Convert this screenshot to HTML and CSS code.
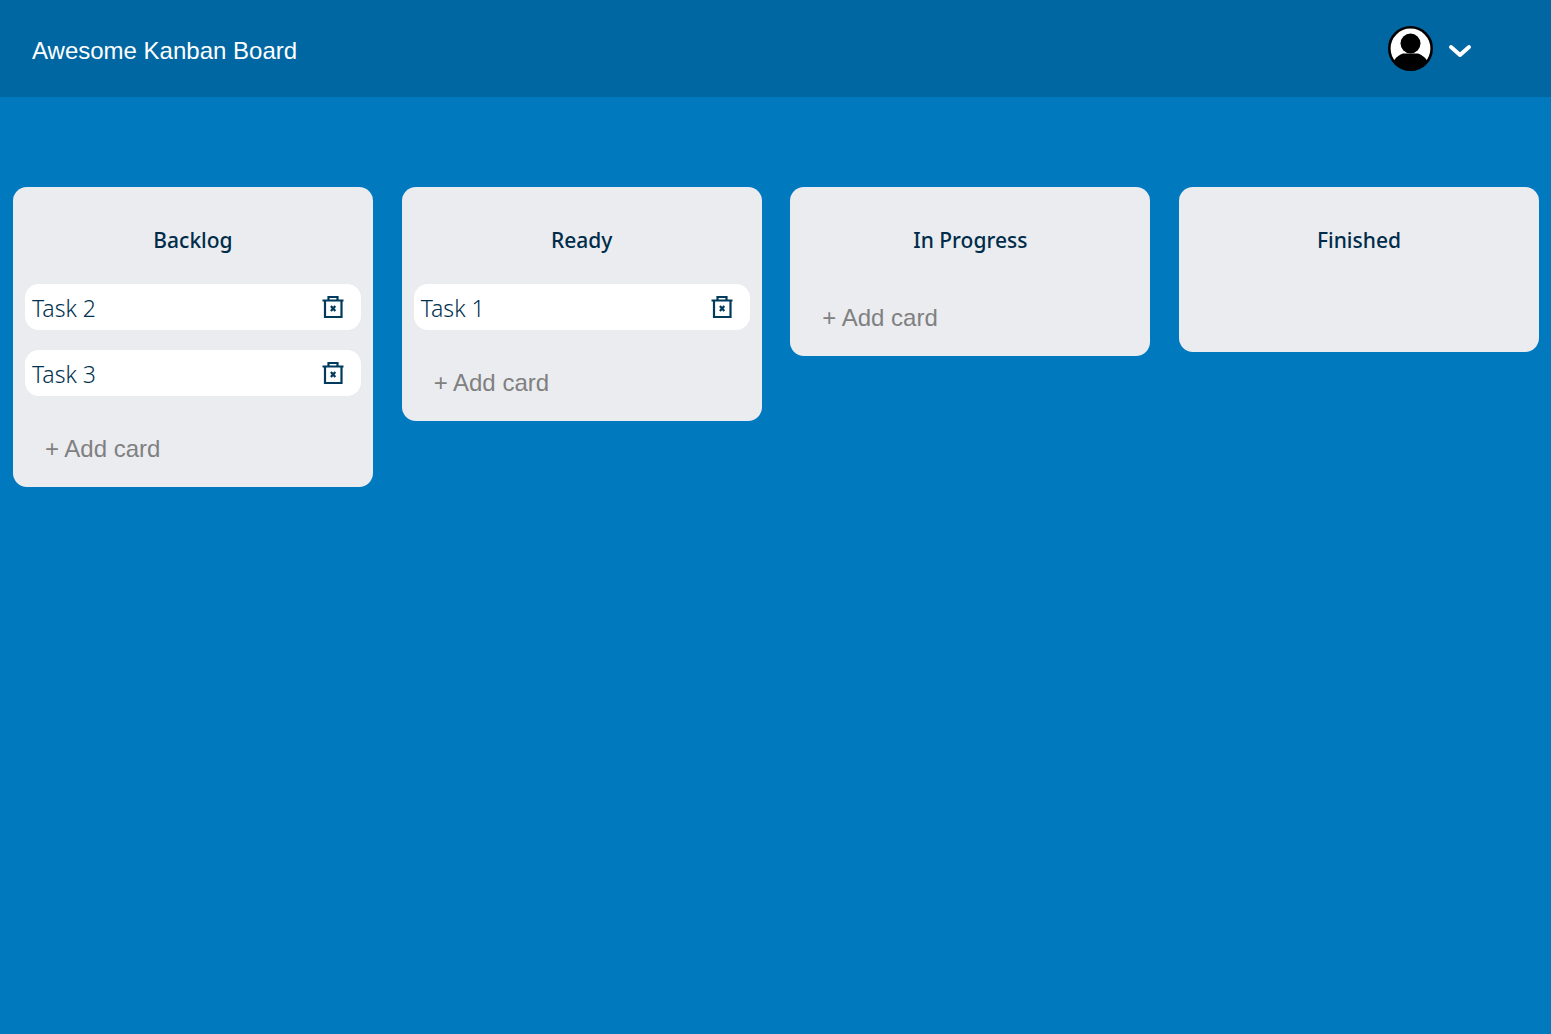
FILE: index.html
```html
<!DOCTYPE html>
<html lang="en">
<head>
<meta charset="utf-8">
<title>Awesome Kanban Board</title>
<link rel="stylesheet" href="styles.css">
</head>
<body>
<header class="topbar">
  <h1 class="brand">Awesome Kanban Board</h1>
  <div class="user">
    <svg class="avatar" viewBox="0 0 45 45" width="45" height="45" aria-hidden="true">
      <defs><clipPath id="c"><circle cx="22.500" cy="22.500" r="21.500"/></clipPath></defs>
      <circle cx="22.500" cy="22.500" r="21.200" fill="#fff" stroke="#000" stroke-width="2.600"/>
      <g clip-path="url(#c)" fill="#000">
        <ellipse cx="22.500" cy="17.500" rx="10" ry="10"/>
        <path d="M3 45C3 36 8 30 15 27.500H30C37 30 42 36 42 45z"/>
      </g>
    </svg>
    <svg class="chevron" viewBox="0 0 24 14" width="24" height="14" aria-hidden="true">
      <path d="M3 3l9 8 9-8" fill="none" stroke="#fff" stroke-width="4" stroke-linecap="round" stroke-linejoin="round"/>
    </svg>
  </div>
</header>
<main class="board">
  <section class="column">
    <h2 class="column-title">Backlog</h2>
    <div class="card"><span>Task 2</span>
      <svg class="trash" viewBox="0 0 22 24" width="22" height="24" aria-hidden="true"><path d="M.5 5.500h21M3 5.500v16.500h16.500V5.500M6.500 5.500V2h9v3.500M8.900 11l4.400 5M13.300 11l-4.400 5" fill="none" stroke="#003a5c" stroke-width="2.200"/></svg>
    </div>
    <div class="card"><span>Task 3</span>
      <svg class="trash" viewBox="0 0 22 24" width="22" height="24" aria-hidden="true"><path d="M.5 5.500h21M3 5.500v16.500h16.500V5.500M6.500 5.500V2h9v3.500M8.900 11l4.400 5M13.300 11l-4.400 5" fill="none" stroke="#003a5c" stroke-width="2.200"/></svg>
    </div>
    <div class="add">+ Add card</div>
  </section>
  <section class="column">
    <h2 class="column-title">Ready</h2>
    <div class="card"><span>Task 1</span>
      <svg class="trash" viewBox="0 0 22 24" width="22" height="24" aria-hidden="true"><path d="M.5 5.500h21M3 5.500v16.500h16.500V5.500M6.500 5.500V2h9v3.500M8.900 11l4.400 5M13.300 11l-4.400 5" fill="none" stroke="#003a5c" stroke-width="2.200"/></svg>
    </div>
    <div class="add">+ Add card</div>
  </section>
  <section class="column">
    <h2 class="column-title">In Progress</h2>
    <div class="add add-first">+ Add card</div>
  </section>
  <section class="column column-empty">
    <h2 class="column-title">Finished</h2>
  </section>
</main>
</body>
</html>
```
FILE: styles.css
```css
* { box-sizing: border-box; }
html, body { margin: 0; height: 100%; }
body { background: #0079bf; font-family: "Liberation Sans", Arial, sans-serif; overflow: hidden; }

.topbar {
  height: 97px;
  background: #0067a3;
  display: flex;
  align-items: center;
  justify-content: space-between;
  padding: 0 79px 0 32px;
}
.brand { margin: 0; font-size: 24px; font-weight: 400; color: #fff; line-height: 1; position: relative; top: 2px; }
.user { display: flex; align-items: center; gap: 15px; }
.avatar { display: block; }
.chevron { display: block; margin-top: 5px; }

.board {
  display: flex;
  justify-content: space-between;
  align-items: flex-start;
  padding: 90px 12px 0 13px;
}
.column {
  width: 360px;
  background: #ebecf0;
  border-radius: 14px;
  padding: 0 12px;
}
.column-empty { padding-bottom: 68px; }
.column-title {
  margin: 0;
  height: 97px;
  padding-top: 36px;
  text-align: center;
  font-family: "Noto Sans", "Open Sans", sans-serif;
  font-size: 21px;
  line-height: 34px;
  font-weight: 500;
  color: #002c4a;
}
.card {
  height: 46px;
  margin-bottom: 20px;
  background: #fff;
  border-radius: 14px;
  padding: 0 17px 0 7px;
  display: flex;
  align-items: center;
  justify-content: space-between;
  font-family: "Noto Sans", "Open Sans", sans-serif;
  font-size: 23px;
  font-weight: 300;
  color: #00314f;
}
.card span { position: relative; top: 1px; }
.trash { display: block; }
.add {
  height: 71px;
  padding: 0 0 5px 20px;
  display: flex;
  align-items: center;
  font-size: 24px;
  color: #808080;
}
.add-first { height: 72px; padding-bottom: 4px; }
```
